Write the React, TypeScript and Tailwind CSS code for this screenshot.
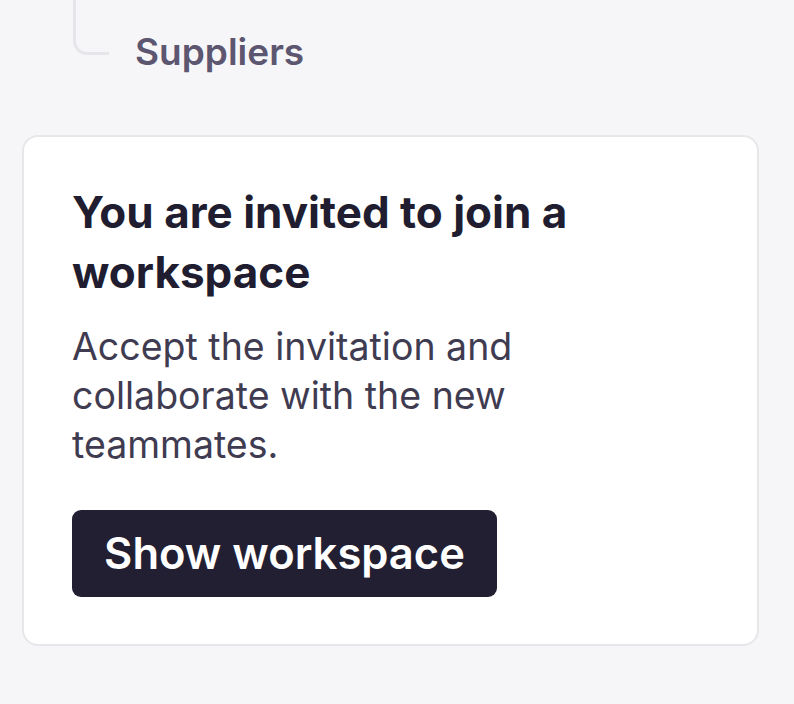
import React from "react";

export default function App() {
  return (
    <div
      className="min-h-[704px] w-[794px] bg-[#f6f6f8] overflow-hidden"
      style={{ fontFamily: "Inter, 'Noto Sans', sans-serif" }}
    >
      <div className="flex items-end h-[80px]">
        <div className="ml-[73px] mb-[25px] h-[80px] w-[36px] border-l-[3px] border-b-[3px] border-[#e6e6ea] rounded-bl-[14px] self-end" />
        <div className="ml-[26px] mb-[6px] text-[37px] leading-[44px] font-semibold text-[#5c5670]">
          Suppliers
        </div>
      </div>
      <div className="mt-[55px] mx-[22px] w-[737px] h-[511px] bg-white border-[2.5px] border-[#e7e7ea] rounded-[16px] pl-[48px] pr-[40px] pt-[45px]">
        <h2 className="text-[44px] leading-[60px] font-bold text-[#211d30] w-[560px]">
          You are invited to join a workspace
        </h2>
        <p className="mt-[20px] text-[37.5px] leading-[49px] text-[#3f3b51] w-[480px]">
          Accept the invitation and collaborate with the new teammates.
        </p>
        <button className="mt-[41px] h-[87px] w-[425px] rounded-[9px] bg-[#231f33] text-white text-[43.5px] font-semibold">
          Show workspace
        </button>
      </div>
    </div>
  );
}
